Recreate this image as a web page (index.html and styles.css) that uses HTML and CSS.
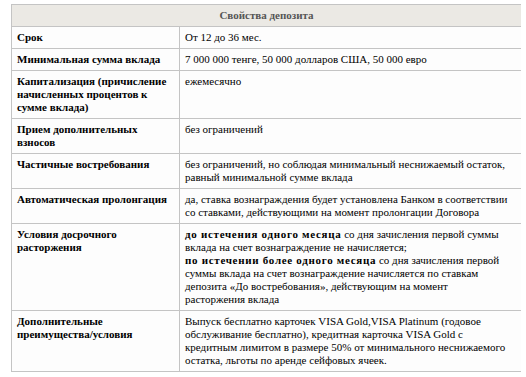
FILE: index.html
```html
<!DOCTYPE html>
<html lang="ru">
<head>
    <meta charset="UTF-8">
    <title>Свойства депозита</title>
    <link rel="stylesheet" href="styles.css">
</head>
<body>
    <table class="deposit-table">
        <tr>
            <th colspan="2" class="table-title">Свойства депозита</th>
        </tr>
        <tr>
            <td class="label">Срок</td>
            <td>От 12 до 36 мес.</td>
        </tr>
        <tr>
            <td class="label">Минимальная сумма вклада</td>
            <td>7 000 000 тенге, 50 000 долларов США, 50 000 евро</td>
        </tr>
        <tr>
            <td class="label">Капитализация (причисление начисленных процентов к сумме вклада)</td>
            <td>ежемесячно</td>
        </tr>
        <tr>
            <td class="label">Прием дополнительных взносов</td>
            <td>без ограничений</td>
        </tr>
        <tr>
            <td class="label">Частичные востребования</td>
            <td>без ограничений, но соблюдая минимальный неснижаемый остаток, равный минимальной сумме вклада</td>
        </tr>
        <tr>
            <td class="label">Автоматическая пролонгация</td>
            <td>да, ставка вознаграждения будет установлена Банком в соответствии со ставками, действующими на момент пролонгации Договора</td>
        </tr>
        <tr>
            <td class="label">Условия досрочного расторжения</td>
            <td><b>до истечения одного месяца</b> со дня зачисления первой суммы вклада на счет вознаграждение не начисляется;<br>
                <b>по истечении более одного месяца</b> со дня зачисления первой суммы вклада на счет вознаграждение начисляется по ставкам депозита «До востребования», действующим на момент расторжения вклада</td>
        </tr>
        <tr>
            <td class="label">Дополнительные преимущества/условия</td>
            <td>Выпуск бесплатно карточек VISA Gold,VISA Platinum (годовое обслуживание бесплатно), кредитная карточка VISA Gold с кредитным лимитом в размере 50% от минимального неснижаемого остатка, льготы по аренде сейфовых ячеек.</td>
        </tr>
    </table>
</body>
</html>
```

FILE: styles.css
```css
body {
    margin: 4px 5px 0 11px;
    background-color: #fff;
    font-family: "Liberation Serif", "Times New Roman", serif;
    font-size: 11px;
    color: #000;
}

.deposit-table {
    width: 511px;
    border-collapse: collapse;
    border: 1px solid #c4c4c4;
}

.deposit-table th,
.deposit-table td {
    border: 1px solid #c4c4c4;
    padding: 4px 5px;
    line-height: 13px;
    text-align: left;
    vertical-align: top;
    background-color: #fdfdfd;
}

.deposit-table td + td {
    padding-right: 11px;
}

.deposit-table td b {
    letter-spacing: 0.7px;
}

.deposit-table .table-title {
    text-align: center;
    background-color: #ebe9e4;
    color: #555;
}

.deposit-table .label {
    width: 157px;
    font-weight: bold;
}
```
